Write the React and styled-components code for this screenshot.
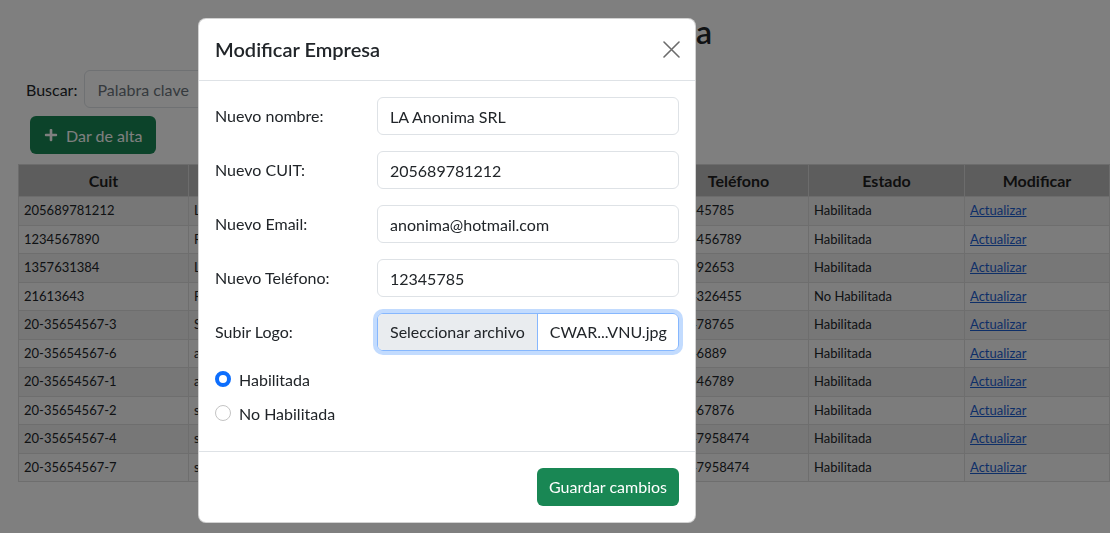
import React from "react";
import styled, { createGlobalStyle } from "styled-components";
import { FaPlus } from "react-icons/fa";

const GlobalStyle = createGlobalStyle`
  html, body { margin: 0; padding: 0; }
  body {
    font-family: Lato, "Noto Sans", "Liberation Sans", sans-serif;
    color: #212529;
    background: #ffffff;
    width: 1110px;
    height: 533px;
    overflow: hidden;
  }
  * { box-sizing: border-box; }
`;

const Page = styled.div`
  padding-top: 13px;
  display: flex;
  flex-direction: column;
  align-items: flex-start;
`;

const PageTitle = styled.h2`
  align-self: stretch;
  margin: 0 0 19px;
  text-align: center;
  font-size: 32px;
  line-height: 38px;
  font-weight: 600;
  color: #212529;
`;

const SearchBar = styled.div`
  display: flex;
  align-items: center;
  gap: 7px;
  margin-left: 26px;
`;

const SearchLabel = styled.label`
  font-size: 16px;
`;

const TextInput = styled.input`
  height: 38px;
  padding: 6px 12px;
  font-family: inherit;
  font-size: 16px;
  line-height: 24px;
  color: #212529;
  background: #fff;
  border: 1px solid #dee2e6;
  border-radius: 6px;
  outline: none;
  width: ${(p) => p.$width || "100%"};
  &::placeholder { color: #6c757d; }
`;

const AddButton = styled.button`
  margin: 8px 0 0 30px;
  height: 38px;
  padding: 0 14px;
  display: inline-flex;
  align-items: center;
  gap: 8px;
  background: #198754;
  color: #fff;
  border: none;
  border-radius: 6px;
  font-family: inherit;
  font-size: 16px;
  svg { width: 14px; height: 14px; }
`;

const Table = styled.table`
  margin: 10px 0 0 18px;
  width: 1091px;
  border-collapse: collapse;
  table-layout: fixed;
  font-size: 13px;
  color: #212529;
`;

const HeadCell = styled.th`
  background: #bbbbbb;
  border: 1px solid #d8d8d8;
  padding: 5px;
  font-size: 16px;
  line-height: 21px;
  font-weight: 700;
  text-align: center;
  color: #1e1e1e;
`;

const Row = styled.tr`
  background: ${(p) => (p.$odd ? "#eeeeee" : "#f9f9f9")};
`;

const Cell = styled.td`
  border: 1px solid #dcdcdc;
  padding: 5px;
  line-height: 17.5px;
  white-space: nowrap;
  overflow: hidden;
`;

const CellLink = styled.a`
  color: #1d5fd1;
  text-decoration: underline;
`;

const Backdrop = styled.div`
  position: fixed;
  inset: 0;
  background: rgba(0, 0, 0, 0.5);
`;

const ModalLayer = styled.div`
  position: fixed;
  inset: 0;
  padding: 18px 0 0 198px;
`;

const Dialog = styled.div`
  width: 498px;
  background: #fff;
  border: 1px solid rgba(0, 0, 0, 0.175);
  border-radius: 8px;
  display: flex;
  flex-direction: column;
`;

const ModalHeader = styled.div`
  display: flex;
  align-items: center;
  justify-content: space-between;
  padding: 16px;
  border-bottom: 1px solid #dee2e6;
`;

const ModalTitle = styled.h5`
  margin: 0;
  font-size: 20px;
  line-height: 29px;
  font-weight: 600;
  color: #212529;
`;

const CloseButton = styled.button`
  width: 24px;
  height: 24px;
  padding: 0;
  border: none;
  background: transparent;
  display: flex;
  align-items: center;
  justify-content: center;
  margin-right: -4px;
`;

const ModalBody = styled.div`
  padding: 16px;
`;

const FieldRow = styled.div`
  display: grid;
  grid-template-columns: 162px 1fr;
  align-items: center;
  margin-bottom: 16px;
`;

const FieldLabel = styled.label`
  font-size: 16px;
  line-height: 24px;
  color: #212529;
`;

const FileBox = styled.div`
  display: flex;
  height: 38px;
  border: 1px solid #86b7fe;
  border-radius: 6px;
  box-shadow: 0 0 0 4px rgba(13, 110, 253, 0.25);
  overflow: hidden;
  font-size: 16px;
  line-height: 24px;
`;

const FileButton = styled.span`
  padding: 6px 12px;
  background: #e9ecef;
  border-right: 1px solid #86b7fe;
  color: #212529;
  white-space: nowrap;
`;

const FileName = styled.span`
  padding: 6px 12px;
  color: #212529;
  white-space: nowrap;
`;

const RadioRow = styled.label`
  display: flex;
  align-items: center;
  gap: 8px;
  height: 24px;
  margin-bottom: 10px;
  font-size: 16px;
  color: #212529;
`;

const RadioDot = styled.span`
  width: 16px;
  height: 16px;
  border-radius: 50%;
  flex: none;
  background: #fff;
  border: ${(p) => (p.$checked ? "4px solid #0d6efd" : "1px solid #c4c4c4")};
`;

const ModalFooter = styled.div`
  display: flex;
  justify-content: flex-end;
  padding: 12px;
  border-top: 1px solid #dee2e6;
`;

const SaveButton = styled.button`
  margin: 4px;
  height: 38px;
  padding: 6px 12px;
  background: #198754;
  color: #fff;
  border: none;
  border-radius: 6px;
  font-family: inherit;
  font-size: 16px;
  line-height: 24px;
`;

const rows = [
  ["205689781212", "LA Anonima SRL", "anonima@hotmail.com", "12345785", "Habilitada"],
  ["1234567890", "Rapido SA", "rapido@gmail.com", "123456789", "Habilitada"],
  ["1357631384", "La Serenisima", "serenisima@gmail.com", "35192653", "Habilitada"],
  ["21613643", "Rosales SRL", "rosales@gmail.com", "154326455", "No Habilitada"],
  ["20-35654567-3", "Sancor", "sancor@gmail.com", "15478765", "Habilitada"],
  ["20-35654567-6", "arcor", "arcor@gmail.com", "1546889", "Habilitada"],
  ["20-35654567-1", "acme", "acme@gmail.com", "12346789", "Habilitada"],
  ["20-35654567-2", "sol", "sol@gmail.com", "15467876", "Habilitada"],
  ["20-35654567-4", "sur", "sur@gmail.com", "1547958474", "Habilitada"],
  ["20-35654567-7", "sierra", "sierra@gmail.com", "1547958474", "Habilitada"],
];

const cols = [170, 232, 248, 140, 156, 145];
const heads = ["Cuit", "Nombre", "Email", "Teléfono", "Estado", "Modificar"];

const fields = [
  ["Nuevo nombre:", "LA Anonima SRL"],
  ["Nuevo CUIT:", "205689781212"],
  ["Nuevo Email:", "anonima@hotmail.com"],
  ["Nuevo Teléfono:", "12345785"],
];

export default function App() {
  return (
    <>
      <GlobalStyle />
      <Page>
        <PageTitle>Gestión de la Empresa</PageTitle>
        <SearchBar>
          <SearchLabel>Buscar:</SearchLabel>
          <TextInput $width="300px" placeholder="Palabra clave" readOnly />
        </SearchBar>
        <AddButton>
          <FaPlus /> Dar de alta
        </AddButton>
        <Table>
          <colgroup>
            {cols.map((w, i) => (
              <col key={i} style={{ width: w }} />
            ))}
          </colgroup>
          <thead>
            <tr>
              {heads.map((h) => (
                <HeadCell key={h}>{h}</HeadCell>
              ))}
            </tr>
          </thead>
          <tbody>
            {rows.map((r, i) => (
              <Row key={i} $odd={i % 2 === 0}>
                {r.map((c, j) => (
                  <Cell key={j}>{c}</Cell>
                ))}
                <Cell>
                  <CellLink href="#">Actualizar</CellLink>
                </Cell>
              </Row>
            ))}
          </tbody>
        </Table>
      </Page>
      <Backdrop />
      <ModalLayer>
        <Dialog>
          <ModalHeader>
            <ModalTitle>Modificar Empresa</ModalTitle>
            <CloseButton aria-label="Cerrar">
              <svg width="17" height="17" viewBox="0 0 17 17">
                <path d="M1 1L16 16M16 1L1 16" stroke="#6c6c6c" strokeWidth="1.6" strokeLinecap="round" />
              </svg>
            </CloseButton>
          </ModalHeader>
          <ModalBody>
            {fields.map(([l, v]) => (
              <FieldRow key={l}>
                <FieldLabel>{l}</FieldLabel>
                <TextInput defaultValue={v} />
              </FieldRow>
            ))}
            <FieldRow>
              <FieldLabel>Subir Logo:</FieldLabel>
              <FileBox>
                <FileButton>Seleccionar archivo</FileButton>
                <FileName>CWAR...VNU.jpg</FileName>
              </FileBox>
            </FieldRow>
            <RadioRow>
              <RadioDot $checked />
              Habilitada
            </RadioRow>
            <RadioRow>
              <RadioDot />
              No Habilitada
            </RadioRow>
          </ModalBody>
          <ModalFooter>
            <SaveButton>Guardar cambios</SaveButton>
          </ModalFooter>
        </Dialog>
      </ModalLayer>
    </>
  );
}
